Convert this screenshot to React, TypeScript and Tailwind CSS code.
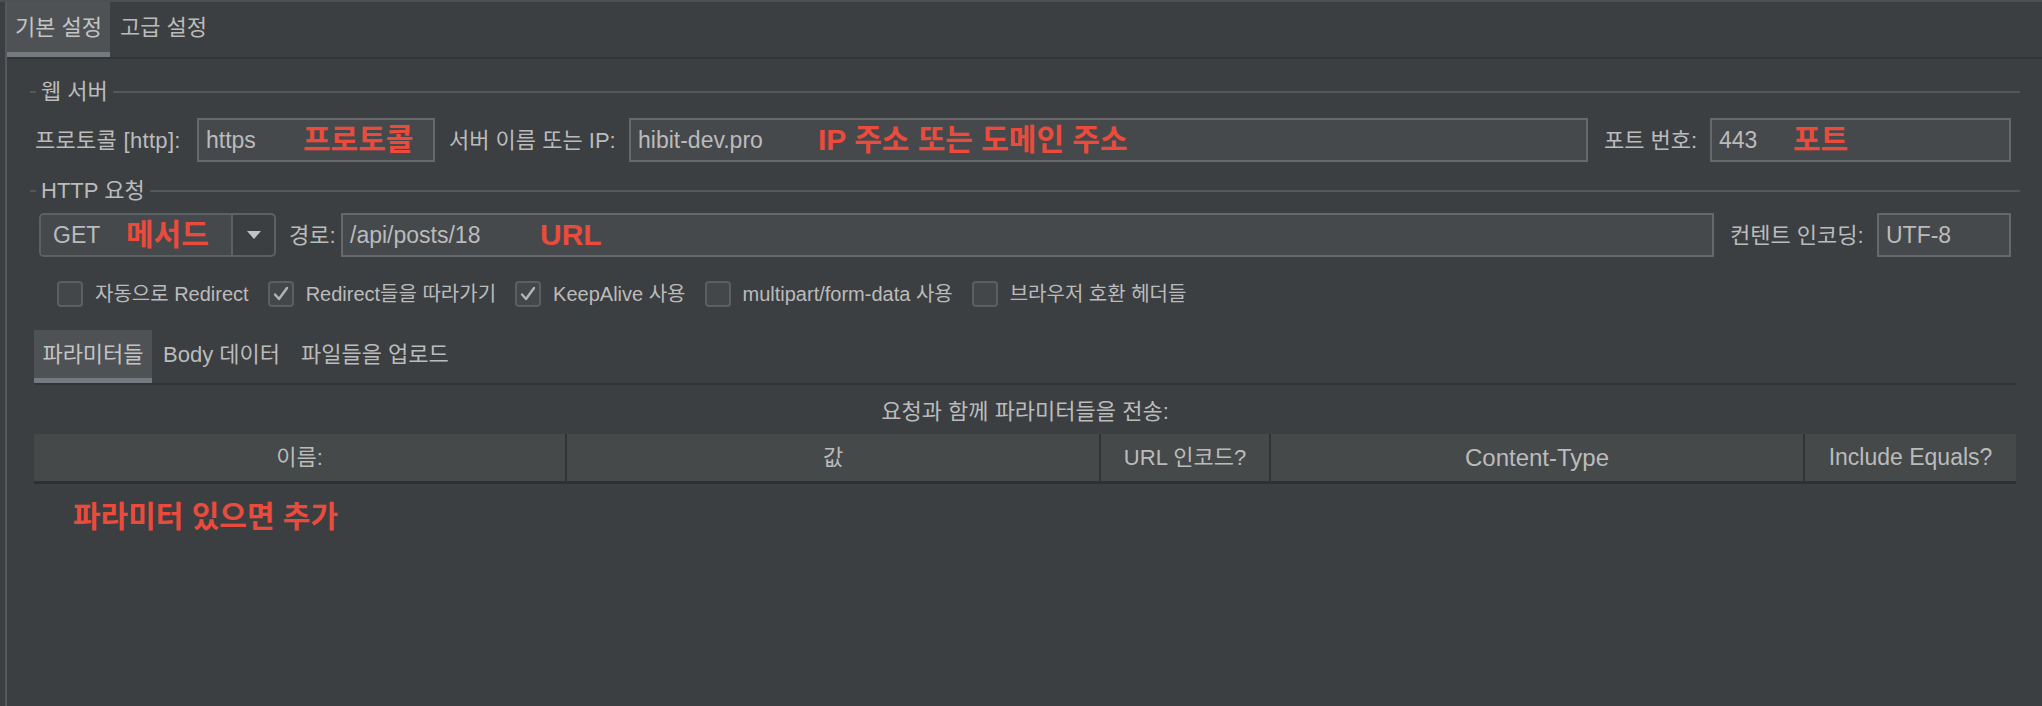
import { ReactNode } from 'react';

const RED = 'text-[#ea4b3c]';

// group title with a short dash before and a line after
const GroupTitle = ({ title }: { title: string }) => (
    <div className="flex items-center h-[30px]">
        <div className="w-[6px] h-[2px] bg-[#55585a]" />
        <span className="px-[5px] leading-none">{title}</span>
        <div className="flex-1 h-[2px] bg-[#55585a]" />
    </div>
);

const Field = ({ value, note, noteLeft, className }: { value: string; note?: string; noteLeft?: string; className: string }) => (
    <div className={`relative h-[44px] bg-[#46494b] border-2 border-[#66686a] flex items-center pl-[7px] ${className}`}>
        <span className="text-[#bbbbbb] text-[23px]">{value}</span>
        {note && (
            <span className={`absolute top-1/2 -translate-y-1/2 ${noteLeft} ${RED} font-bold text-[30px] leading-none`}>{note}</span>
        )}
    </div>
);

const Check = ({ checked, children }: { checked?: boolean; children: ReactNode }) => (
    <div className="flex items-center">
        <div className="w-[26px] h-[26px] rounded-[4px] border-2 border-[#5c5f61] bg-[#43474a] flex items-center justify-center">
            {checked && (
                <svg width="18" height="18" viewBox="0 0 18 18" fill="none">
                    <path d="M3 9.5 L7 14 L15 3" stroke="#b4b4b4" strokeWidth="2.4" strokeLinecap="round" strokeLinejoin="round" />
                </svg>
            )}
        </div>
        <span className="ml-[12px] mr-[19px] text-[20px]">{children}</span>
    </div>
);

const headers = [
    { label: '이름:', w: 'w-[533px]', size: 'text-[22px]' },
    { label: '값', w: 'w-[534px]', size: 'text-[22px]' },
    { label: 'URL 인코드?', w: 'w-[170px]', size: 'text-[22px]' },
    { label: 'Content-Type', w: 'w-[534px]', size: 'text-[24px]' },
    { label: 'Include Equals?', w: 'flex-1', size: 'text-[23px]' },
];

const App = () => {
    return (
        <div className="w-[2042px] h-[706px] bg-[#3c3f41] flex flex-col overflow-hidden text-[#bbbbbb] text-[22px] font-['Liberation_Sans','Noto_Sans_CJK_KR',sans-serif]">
            <div className="h-[2px] bg-[#4d5052]" />
            <div className="flex-1 flex">
                <div className="w-[5px]" />
                <div className="w-[2px] bg-[#56595b]" />
                <div className="flex-1 flex flex-col">
                    {/* top tabs */}
                    <div className="h-[57px] flex border-b-2 border-[#323436]">
                        <div className="w-[103px] bg-[#4e5254] border-b-[5px] border-[#747a80] flex items-center justify-center text-[22px] text-[#c4c4c4]">
                            기본 설정
                        </div>
                        <div className="px-[10px] flex items-center text-[22px] pb-[5px]">고급 설정</div>
                    </div>

                    <div className="pl-[23px] pr-[22px]">
                        {/* 웹 서버 */}
                        <div className="mt-[18px]">
                            <GroupTitle title="웹 서버" />
                        </div>
                        <div className="mt-[11px] flex items-center pl-[5px] pr-[9px]">
                            <span className="w-[162px] tracking-[0.3px]">프로토콜 [http]:</span>
                            <Field value="https" note="프로토콜" noteLeft="left-[104px]" className="w-[238px]" />
                            <span className="ml-[14px] w-[180px]">서버 이름 또는 IP:</span>
                            <Field value="hibit-dev.pro" note="IP 주소 또는 도메인 주소" noteLeft="left-[187px]" className="flex-1" />
                            <span className="ml-[16px] w-[106px]">포트 번호:</span>
                            <Field value="443" note="포트" noteLeft="left-[81px]" className="w-[301px]" />
                        </div>

                        {/* HTTP 요청 */}
                        <div className="mt-[14px]">
                            <GroupTitle title="HTTP 요청" />
                        </div>
                        <div className="mt-[7px] flex items-center pl-[9px] pr-[9px]">
                            <div className="relative h-[44px] w-[237px] flex rounded-[5px] border-2 border-[#5e6163] overflow-hidden">
                                <div className="w-[190px] bg-[#46494b] flex items-center pl-[12px] text-[23px]">GET</div>
                                <span className={`absolute left-[85px] top-1/2 -translate-y-1/2 ${RED} font-bold text-[30px] leading-none`}>메서드</span>
                                <div className="w-[2px] bg-[#5e6163]" />
                                <div className="flex-1 flex items-center justify-center">
                                    <svg width="16" height="10" viewBox="0 0 16 10">
                                        <path d="M1 1 H15 L8 9 Z" fill="#c2c2c2" />
                                    </svg>
                                </div>
                            </div>
                            <span className="ml-[13px] w-[52px]">경로:</span>
                            <Field value="/api/posts/18" note="URL" noteLeft="left-[197px]" className="flex-1" />
                            <span className="ml-[16px] w-[147px]">컨텐트 인코딩:</span>
                            <Field value="UTF-8" className="w-[134px]" />
                        </div>

                        {/* options */}
                        <div className="mt-[24px] h-[26px] flex items-center pl-[27px]">
                            <Check>자동으로 Redirect</Check>
                            <Check checked>Redirect들을 따라가기</Check>
                            <Check checked>KeepAlive 사용</Check>
                            <Check>multipart/form-data 사용</Check>
                            <Check>브라우저 호환 헤더들</Check>
                        </div>

                        {/* parameters */}
                        <div className="pl-[4px] pr-[4px]">
                            <div className="mt-[23px] h-[55px] flex border-b-2 border-[#323436]">
                                <div className="w-[118px] bg-[#4e5254] border-b-[5px] border-[#747a80] flex items-center justify-center text-[22px] text-[#c4c4c4]">
                                    파라미터들
                                </div>
                                <div className="pl-[11px] flex items-center text-[22px] pb-[5px]">Body 데이터</div>
                                <div className="pl-[21px] flex items-center text-[22px] pb-[5px]">파일들을 업로드</div>
                            </div>
                            <div className="mt-[12px] h-[28px] flex items-center justify-center text-[22px]">
                                요청과 함께 파라미터들을 전송:
                            </div>
                            <div className="mt-[9px] h-[50px] flex bg-[#45494a] border-b-[3px] border-[#2e3032]">
                                {headers.map((h, i) => (
                                    <div
                                        key={h.label}
                                        className={`${h.w} ${h.size} flex items-center justify-center ${i < headers.length - 1 ? 'border-r-2 border-[#313335]' : ''}`}
                                    >
                                        {h.label}
                                    </div>
                                ))}
                            </div>
                            <div className={`mt-[13px] pl-[39px] ${RED} font-bold text-[30px] leading-[40px]`}>
                                파라미터 있으면 추가
                            </div>
                        </div>
                    </div>
                </div>
            </div>
        </div>
    );
};

export default App;
